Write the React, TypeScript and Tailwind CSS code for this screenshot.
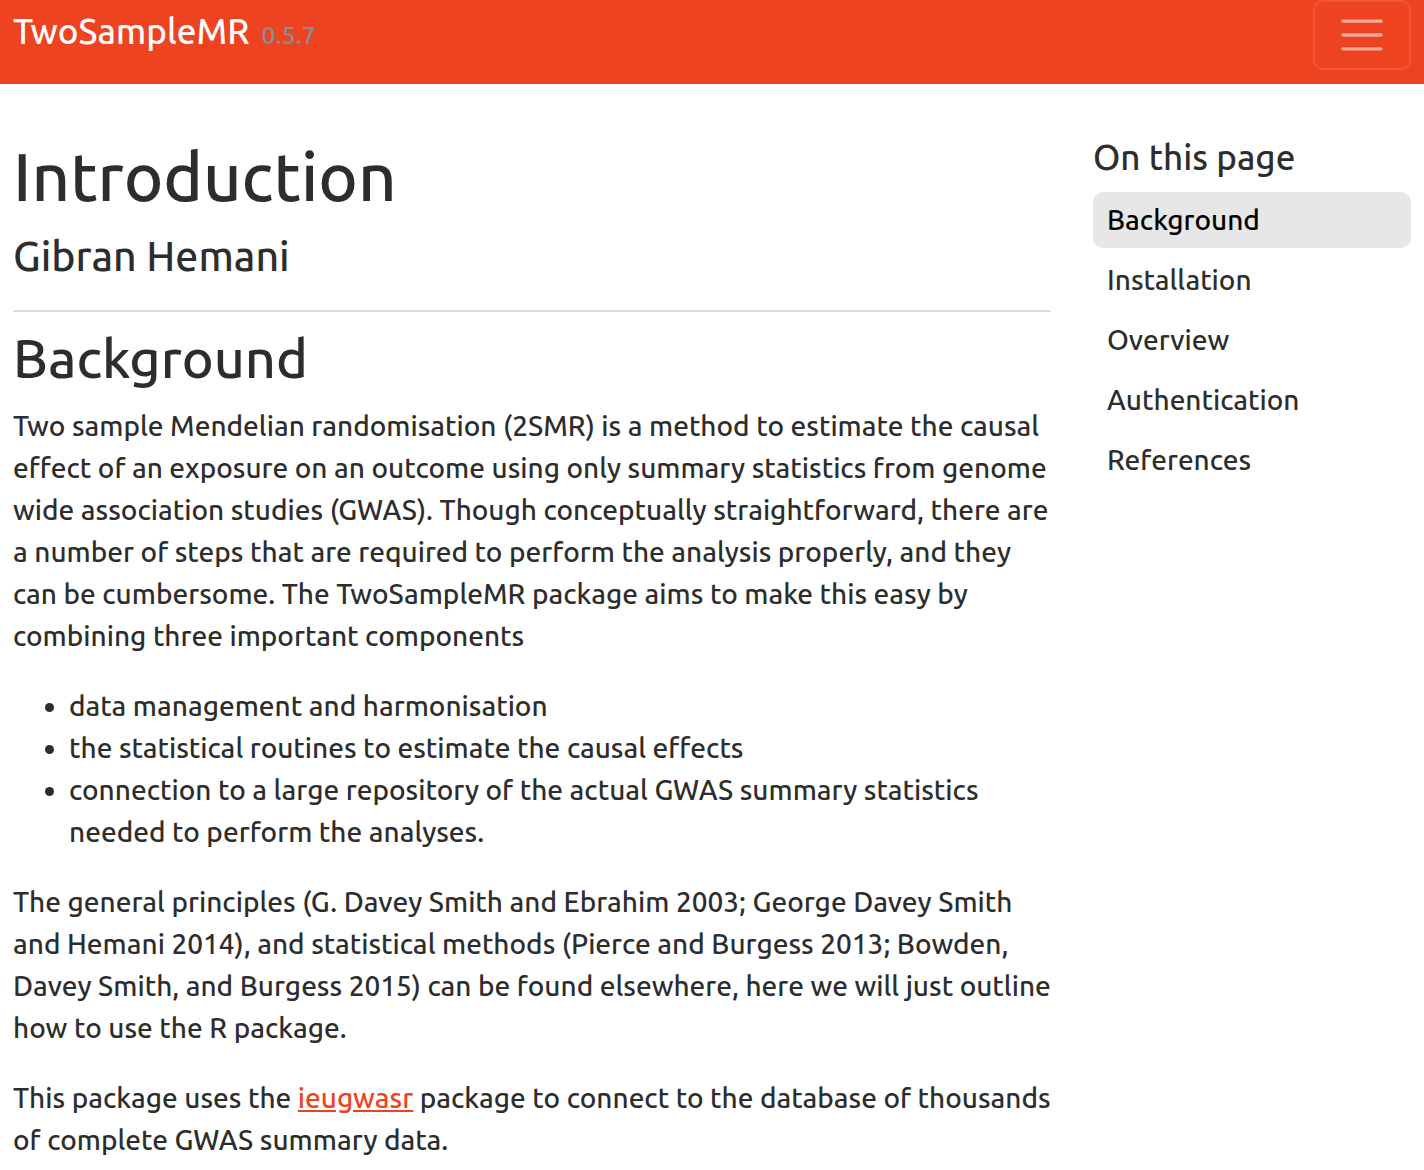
import React from 'react';

const sections = ['Background', 'Installation', 'Overview', 'Authentication', 'References'];

const components = [
  'data management and harmonisation',
  'the statistical routines to estimate the causal effects',
  'connection to a large repository of the actual GWAS summary statistics needed to perform the analyses.',
];

const Navbar: React.FC = () => (
  <header className="flex h-[84px] items-start justify-between bg-[#ee4320] px-[13px]">
    <div className="flex items-baseline gap-3 pt-[5px]">
      <a href="#top" className="text-[35px] leading-[53px] text-white">TwoSampleMR</a>
      <small className="text-[25px] text-[#868e96]">0.5.7</small>
    </div>
    <button
      type="button"
      aria-label="Toggle navigation"
      className="flex h-[70px] w-[98px] items-center justify-center rounded-[10px] border-2 border-white/10"
    >
      <svg width="52" height="52" viewBox="0 0 30 30" fill="none" stroke="white" strokeOpacity="0.55" strokeLinecap="round" strokeWidth="2">
        <path d="M4 7h22M4 15h22M4 23h22" />
      </svg>
    </button>
  </header>
);

const TableOfContents: React.FC = () => (
  <nav aria-labelledby="toc-title" className="w-[318px] shrink-0 pt-[52px]">
    <h2 id="toc-title" className="mb-[14px] text-[35px] leading-[42px]">On this page</h2>
    <ul className="flex flex-col gap-1">
      {sections.map((name, i) => (
        <li key={name}>
          <a
            href={`#${name.toLowerCase()}`}
            className={`block rounded-[10px] px-[14px] py-[7px] ${i === 0 ? 'bg-[#e7e7e7] text-black' : ''}`}
          >
            {name}
          </a>
        </li>
      ))}
    </ul>
  </nav>
);

export default function App() {
  return (
    <div id="top" className="min-h-screen bg-white font-['Ubuntu','Noto_Sans',sans-serif] text-[28px] leading-[42px] font-medium text-[#2d2d2d]">
      <Navbar />
      <div className="flex gap-[42px] px-[13px]">
        <main className="min-w-0 flex-1 pt-[52px]">
          <h1 className="mb-[14px] text-[67px] leading-[81px]">Introduction</h1>
          <h4 className="text-[41px] leading-[51px]">Gibran Hemani</h4>
          <hr className="mt-[28px] mb-[14px] border-t-2 border-[#d9dee2]" />
          <h2 id="background" className="mb-[14px] text-[54px] leading-[65px]">Background</h2>
          <p className="mb-[28px]">
            Two sample Mendelian randomisation (2SMR) is a method to estimate the causal effect of an exposure on an outcome using only summary statistics from genome wide association studies (GWAS). Though conceptually straightforward, there are a number of steps that are required to perform the analysis properly, and they can be cumbersome. The TwoSampleMR package aims to make this easy by combining three important components
          </p>
          <ul className="mb-[28px] list-disc pl-[56px]">
            {components.map((text) => <li key={text}>{text}</li>)}
          </ul>
          <p className="mb-[28px]">
            The general principles (G. Davey Smith and Ebrahim 2003; George Davey Smith and Hemani 2014), and statistical methods (Pierce and Burgess 2013; Bowden, Davey Smith, and Burgess 2015) can be found elsewhere, here we will just outline how to use the R package.
          </p>
          <p>
            This package uses the <a href="#ieugwasr" className="text-[#ee4320] underline">ieugwasr</a> package to connect to the database of thousands of complete GWAS summary data.
          </p>
        </main>
        <TableOfContents />
      </div>
    </div>
  );
}
